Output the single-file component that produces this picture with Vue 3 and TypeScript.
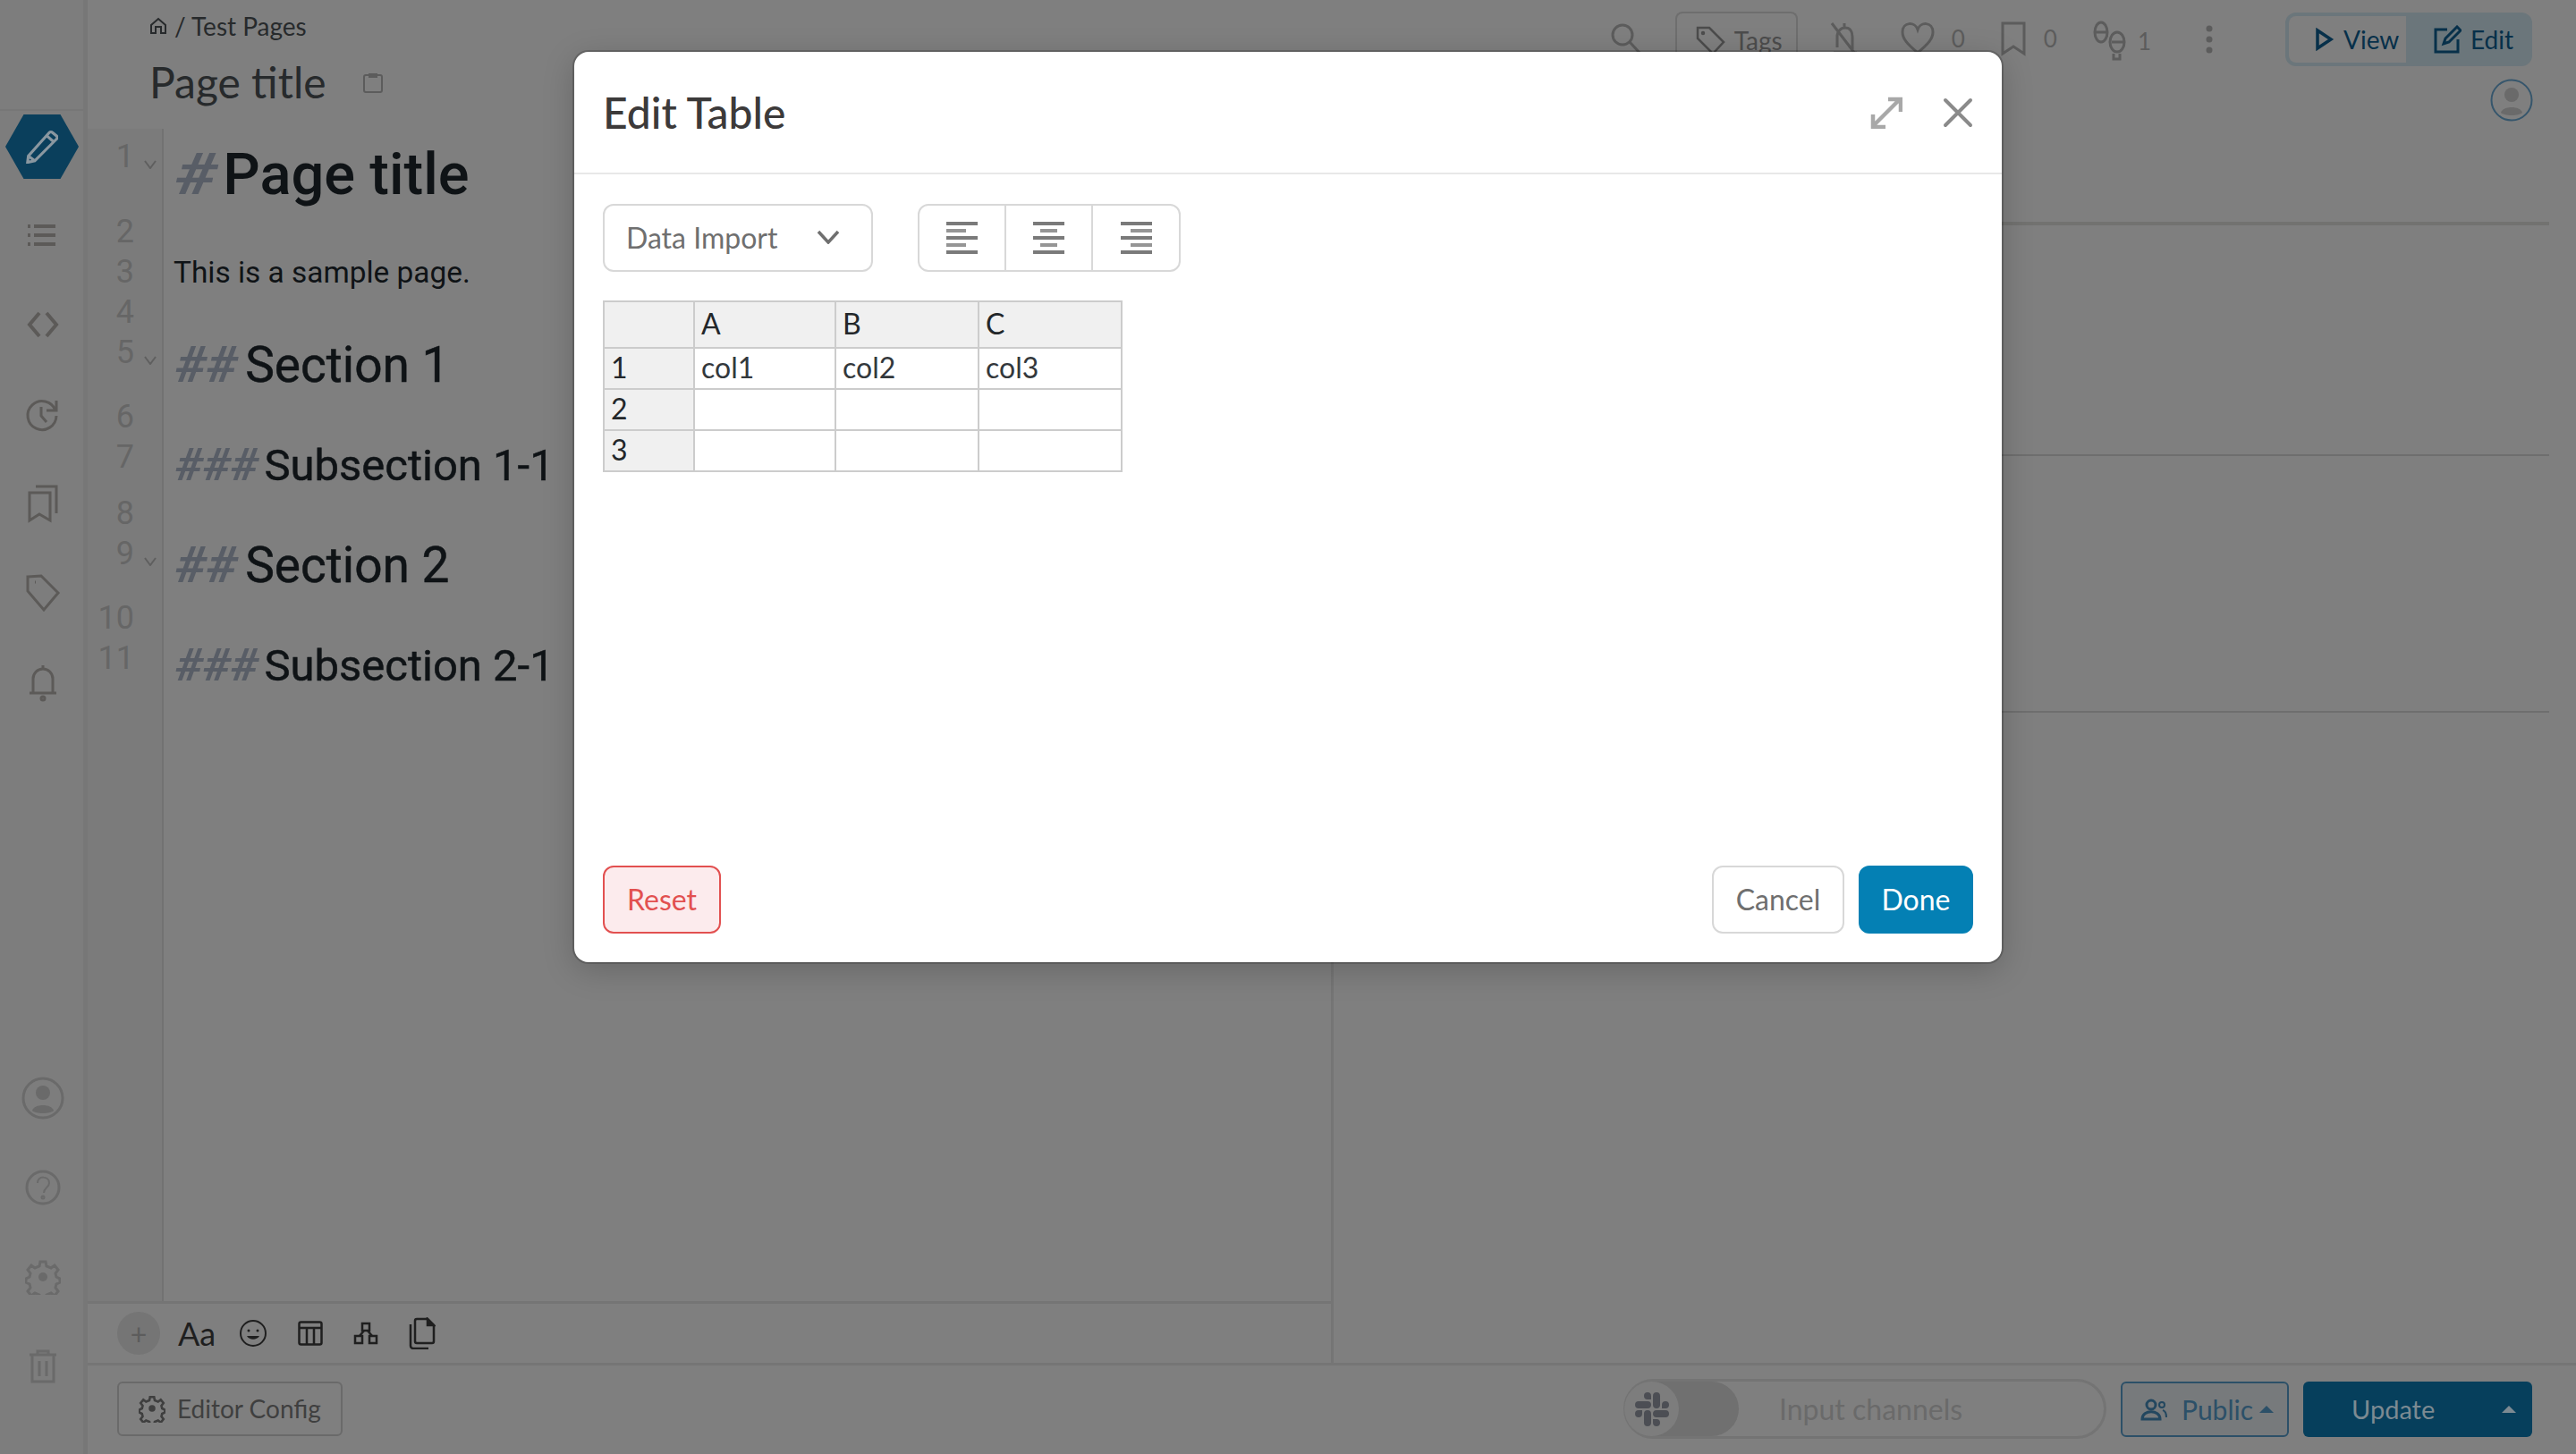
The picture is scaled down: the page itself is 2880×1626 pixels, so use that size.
<script setup lang="ts">
const sideTop = ['list', 'code', 'history', 'marks', 'tag', 'bell']
const rows = [
  { n: '', cells: ['A', 'B', 'C'], head: true },
  { n: '1', cells: ['col1', 'col2', 'col3'], head: false },
  { n: '2', cells: ['', '', ''], head: false },
  { n: '3', cells: ['', '', ''], head: false },
]
const lines = [
  { n: 1, h: 84, fold: true },
  { n: 2, h: 45, fold: false },
  { n: 3, h: 45, fold: false },
  { n: 4, h: 45, fold: false },
  { n: 5, h: 72, fold: true },
  { n: 6, h: 45, fold: false },
  { n: 7, h: 63, fold: false },
  { n: 8, h: 45, fold: false },
  { n: 9, h: 72, fold: true },
  { n: 10, h: 45, fold: false },
  { n: 11, h: 63, fold: false },
]
const slack = 'M5.042 15.165a2.528 2.528 0 0 1-2.52 2.523A2.528 2.528 0 0 1 0 15.165a2.527 2.527 0 0 1 2.522-2.52h2.52v2.52zM6.313 15.165a2.527 2.527 0 0 1 2.521-2.52 2.527 2.527 0 0 1 2.521 2.52v6.313A2.528 2.528 0 0 1 8.834 24a2.528 2.528 0 0 1-2.521-2.522v-6.313zM8.834 5.042a2.528 2.528 0 0 1-2.521-2.52A2.528 2.528 0 0 1 8.834 0a2.528 2.528 0 0 1 2.521 2.522v2.52H8.834zM8.834 6.313a2.528 2.528 0 0 1 2.521 2.521 2.528 2.528 0 0 1-2.521 2.521H2.522A2.528 2.528 0 0 1 0 8.834a2.528 2.528 0 0 1 2.522-2.521h6.312zM18.956 8.834a2.528 2.528 0 0 1 2.522-2.521A2.528 2.528 0 0 1 24 8.834a2.528 2.528 0 0 1-2.522 2.521h-2.522V8.834zM17.688 8.834a2.528 2.528 0 0 1-2.523 2.521 2.527 2.527 0 0 1-2.52-2.521V2.522A2.527 2.527 0 0 1 15.165 0a2.528 2.528 0 0 1 2.523 2.522v6.312zM15.165 18.956a2.528 2.528 0 0 1 2.523 2.522A2.528 2.528 0 0 1 15.165 24a2.527 2.527 0 0 1-2.52-2.522v-2.522h2.52zM15.165 17.688a2.527 2.527 0 0 1-2.52-2.523 2.526 2.526 0 0 1 2.52-2.52h6.313A2.527 2.527 0 0 1 24 15.165a2.528 2.528 0 0 1-2.522 2.523h-6.313z'
</script>

<template>
  <div class="app">
    <aside class="sidebar">
      <div class="side-top"></div>
      <div class="hex">
        <svg width="36" height="37" viewBox="0 0 40 40" fill="none" stroke="#8a97a0" stroke-width="3.5"><path d="M2 39l1-8L29 2c1-1 3-1 4 0l5 4c1 1 1 3 0 4L11 37zM3 31l8 6M26 6l8 7"/></svg>
      </div>
      <div class="side-icons">
        <svg v-for="k in sideTop" :key="k" width="40" height="52" viewBox="0 0 40 52" fill="none" stroke="#5c5a58" stroke-width="3">
          <template v-if="k === 'list'"><path d="M10 16h24M10 26h24M10 36h24" stroke-width="4"/><path d="M3 16h3M3 26h3M3 36h3" stroke-width="4"/></template>
          <template v-if="k === 'code'"><path d="M16 13L5 26l11 13M24 13l11 13-11 13" stroke-width="4"/></template>
          <template v-if="k === 'history'"><path d="M34 22a16 16 0 1 0 1 6M35 11v11H24M18 18v10l6 7" /></template>
          <template v-if="k === 'marks'"><path d="M5 14h23v31L16 38 5 45zM12 7h23v30"/></template>
          <template v-if="k === 'tag'"><path d="M3 8l15-1 19 19-16 19L3 24zM11 14h1"/></template>
          <template v-if="k === 'bell'"><path d="M5 38h30M9 38V22a11 11 0 0 1 22 0v16M20 7v4"/><circle cx="20" cy="44" r="2"/></template>
        </svg>
      </div>
      <div class="side-bottom">
        <svg class="sb-av" width="48" height="48" viewBox="0 0 48 48" fill="none" stroke="#6a6a6a" stroke-width="3"><circle cx="24" cy="24" r="22"/><circle cx="24" cy="18" r="8" fill="#6a6a6a" stroke="none"/><path d="M12 38c2-8 22-8 24 0-4 4-20 4-24 0z" fill="#6a6a6a" stroke="none"/></svg>
        <svg width="40" height="40" viewBox="0 0 40 40" fill="none" stroke="#6a6a6a" stroke-width="3"><circle cx="20" cy="20" r="18"/><path d="M14 15c0-9 13-8 13 0 0 5-6 5-6 11" stroke-width="2"/><circle cx="20" cy="31" r="1"/></svg>
        <svg width="40" height="40" viewBox="0 0 40 40" fill="#6a6a6a" stroke="#6a6a6a" stroke-width="3"><path fill="none" d="M17 3h6l1 5 5 2 4-3 4 5-3 4 1 4 4 2v4l-4 2-1 4 3 4-4 5-4-3-5 2-1 4h-6l-1-4-5-2-4 3-4-5 3-4-1-4-4-2v-4l4-2 1-4-3-4 4-5 4 3 5-2z"/><circle cx="20" cy="20" r="5" stroke="none"/></svg>
        <svg width="40" height="40" viewBox="0 0 40 40" fill="none" stroke="#6a6a6a" stroke-width="3"><path d="M5 7h30M14 6V3h12v3M8 8v29h24V8M16 14v17M24 14v17"/></svg>
      </div>
    </aside>

    <div class="main">
      <header class="top">
        <div class="crumbs">
          <div class="crumb">
            <svg width="20" height="20" viewBox="0 0 20 20" fill="none" stroke="#272a2c" stroke-width="2"><path d="M2 9l8-7 8 7v9h-5v-7H7v7H2z"/></svg>
            <span>/ Test Pages</span>
          </div>
          <div class="title-row">
            <span class="page-title">Page title</span>
            <svg width="24" height="24" viewBox="0 0 24 24" fill="none" stroke="#5c5c5c" stroke-width="2"><rect x="2" y="4" width="20" height="19" rx="2"/><path d="M8 3h8v3H8z" fill="#5c5c5c"/></svg>
          </div>
        </div>
        <div class="actions">
          <svg class="a-search" width="36" height="36" viewBox="0 0 36 36" fill="none" stroke="#5c5c5c" stroke-width="3"><circle cx="14" cy="14" r="11"/><path d="M22 22l12 13"/></svg>
          <div class="tags">
            <svg width="34" height="34" viewBox="0 0 34 34" fill="none" stroke="#4c4c4c" stroke-width="2.5"><path d="M3 3h13l16 16-12 13L3 15z"/><circle cx="9" cy="9" r="1"/></svg>
            <span>Tags</span>
          </div>
          <svg class="a-bell" width="36" height="40" viewBox="0 0 36 40" fill="none" stroke="#5c5c5c" stroke-width="3"><path d="M4 3l26 34M6 36h26M10 30V18c0-6 4-10 9-10s8 4 8 10v14M18 8V3"/></svg>
          <div class="count heart">
            <svg width="40" height="40" viewBox="0 0 40 40" fill="none" stroke="#5c5c5c" stroke-width="3"><path d="M20 36C8 26 3 20 3 13c0-12 14-12 17-3 3-9 17-9 17 3 0 7-5 13-17 23z"/></svg>
            <span>0</span>
          </div>
          <div class="count mark">
            <svg width="30" height="40" viewBox="0 0 30 40" fill="none" stroke="#5c5c5c" stroke-width="3"><path d="M3 3h24v34l-12-8-12 8z"/></svg>
            <span>0</span>
          </div>
          <div class="count foot">
            <svg width="40" height="46" viewBox="0 0 40 46" fill="none" stroke="#5c5c5c" stroke-width="3"><ellipse cx="10" cy="13" rx="7" ry="11"/><path d="M4 13h13"/><ellipse cx="28" cy="24" rx="8" ry="11"/><path d="M22 24h13M24 37v6h7v-6"/></svg>
            <span>1</span>
          </div>
          <svg class="a-dots" width="10" height="32" viewBox="0 0 10 32" fill="#5c5c5c"><circle cx="5" cy="4" r="3.5"/><circle cx="5" cy="16" r="3.5"/><circle cx="5" cy="28" r="3.5"/></svg>
          <div class="mode">
            <div class="mode-view">
              <svg width="22" height="26" viewBox="0 0 22 26" fill="none" stroke="#07304a" stroke-width="3.5"><path d="M3 3l15 10L3 23z"/></svg>
              <span>View</span>
            </div>
            <div class="mode-edit">
              <svg width="32" height="32" viewBox="0 0 32 32" fill="none" stroke="#07304a" stroke-width="3"><path d="M16 5H3v25h25V16M12 21l2-6L27 2l4 4-13 13z"/></svg>
              <span>Edit</span>
            </div>
          </div>
        </div>
      </header>

      <div class="work">
        <div class="left">
          <div class="editor">
            <div class="gutter">
              <div v-for="l in lines" :key="l.n" class="gline" :style="{ height: l.h + 'px' }">
                <span class="num">{{ l.n }}</span>
                <svg v-if="l.fold" class="fold" width="14" height="10" viewBox="0 0 14 10" fill="none" stroke="#5f5f5f" stroke-width="2"><path d="M1 1l6 8 6-8"/></svg>
              </div>
            </div>
            <div class="code">
              <div class="c-h1"><i>#</i>Page title</div>
              <div class="c-p">This is a sample page.</div>
              <div class="c-h2"><i>##</i>Section 1</div>
              <div class="c-h3"><i>###</i>Subsection 1-1</div>
              <div class="c-h2"><i>##</i>Section 2</div>
              <div class="c-h3"><i>###</i>Subsection 2-1</div>
            </div>
          </div>
          <div class="toolbar">
            <div class="plus">+</div>
            <span class="aa">Aa</span>
            <svg width="30" height="30" viewBox="0 0 30 30" fill="none" stroke="#1f1f1f" stroke-width="2"><circle cx="15" cy="15" r="14"/><circle cx="10" cy="12" r="1.5" fill="#1f1f1f" stroke="none"/><circle cx="20" cy="12" r="1.5" fill="#1f1f1f" stroke="none"/><path d="M8 18c3 5 11 5 14 0z" fill="#1f1f1f" stroke="none"/></svg>
            <svg class="tb-table" width="28" height="28" viewBox="0 0 28 28" fill="none" stroke="#1f1f1f" stroke-width="2.5"><rect x="1.5" y="1.5" width="25" height="25" rx="2"/><path d="M1.5 8h25M10 8v18M18 8v18"/></svg>
            <svg width="28" height="26" viewBox="0 0 28 26" fill="none" stroke="#1f1f1f" stroke-width="2.5"><rect x="10" y="2" width="8" height="8"/><rect x="2" y="16" width="8" height="8"/><rect x="18" y="16" width="8" height="8"/><path d="M12 10l-5 6M16 10l5 6"/></svg>
            <svg width="30" height="36" viewBox="0 0 30 36" fill="none" stroke="#1f1f1f" stroke-width="2.5"><path d="M9 2h12l7 7v18a2 2 0 0 1-2 2H9a2 2 0 0 1-2-2V4a2 2 0 0 1 2-2z"/><path d="M2 8v24a3 3 0 0 0 3 3h17"/><path d="M21 2v7h7z" fill="#1f1f1f"/></svg>
          </div>
        </div>
        <div class="preview">
          <div class="avatar-row">
            <svg width="48" height="48" viewBox="0 0 48 48" fill="none"><circle cx="24" cy="24" r="22.5" stroke="#36566c" stroke-width="2"/><circle cx="24" cy="18" r="8" fill="#6a6a6a"/><path d="M12 38c2-8 22-8 24 0-4 4-20 4-24 0z" fill="#6a6a6a"/></svg>
          </div>
          <div class="prev-rule r1"></div>
          <div class="prev-rule r2"></div>
          <div class="prev-rule r3"></div>
        </div>
      </div>

      <footer class="foot-bar">
        <div class="cfg">
          <svg width="30" height="32" viewBox="0 0 40 40" fill="#3f3f3f" stroke="#3f3f3f" stroke-width="3.5"><path fill="none" d="M17 3h6l1 5 5 2 4-3 4 5-3 4 1 4 4 2v4l-4 2-1 4 3 4-4 5-4-3-5 2-1 4h-6l-1-4-5-2-4 3-4-5 3-4-1-4-4-2v-4l4-2 1-4-3-4 4-5 4 3 5-2z"/><circle cx="20" cy="20" r="5" stroke="none"/></svg>
          <span>Editor Config</span>
        </div>
        <div class="foot-right">
          <div class="slack">
            <div class="knob-wrap">
              <div class="knob">
                <svg width="38" height="38" viewBox="0 0 24 24" fill="#4c4e54"><path :d="slack"/></svg>
              </div>
            </div>
            <span>Input channels</span>
          </div>
          <div class="public">
            <svg width="30" height="26" viewBox="0 0 30 26" fill="none" stroke="#23475f" stroke-width="3"><circle cx="12" cy="8" r="5"/><path d="M2 24c0-11 20-11 20 0z"/><circle cx="24" cy="8" r="3" stroke-width="2"/><path d="M25 14c3 1 4 4 4 8" stroke-width="2"/></svg>
            <span>Public</span>
            <i class="caret"></i>
          </div>
          <div class="update">
            <span>Update</span>
            <i class="caret"></i>
          </div>
        </div>
      </footer>
    </div>

    <div class="backdrop">
      <section class="modal">
        <div class="m-head">
          <h2>Edit Table</h2>
          <div class="m-head-icons">
            <svg width="36" height="36" viewBox="0 0 36 36" fill="none" stroke="#a8a8a8" stroke-width="4.5"><path d="M4 32L32 4M20 3h14v14M3 20v14h14"/></svg>
            <svg width="34" height="34" viewBox="0 0 34 34" fill="none" stroke="#8a8a8a" stroke-width="4" stroke-linecap="round"><path d="M3 3l28 28M31 3L3 31"/></svg>
          </div>
        </div>
        <div class="m-body">
          <div class="m-tools">
            <div class="select">
              <span>Data Import</span>
              <svg width="26" height="16" viewBox="0 0 26 16" fill="none" stroke="#6f6f6f" stroke-width="3.5"><path d="M2 2l11 12L24 2"/></svg>
            </div>
            <div class="aligns">
              <button class="al"><svg width="35" height="36" viewBox="0 0 35 36" fill="#7a7a7a"><rect y="0" width="35" height="4"/><rect y="8" width="22" height="4" opacity=".8"/><rect y="16" width="35" height="4"/><rect y="24" width="22" height="4" opacity=".8"/><rect y="32" width="35" height="4"/></svg></button>
              <button class="al"><svg width="35" height="36" viewBox="0 0 35 36" fill="#7a7a7a"><rect y="0" width="35" height="4"/><rect x="8" y="8" width="19" height="4" opacity=".8"/><rect y="16" width="35" height="4"/><rect x="8" y="24" width="19" height="4" opacity=".8"/><rect y="32" width="35" height="4"/></svg></button>
              <button class="al"><svg width="35" height="36" viewBox="0 0 35 36" fill="#7a7a7a"><rect y="0" width="35" height="4"/><rect x="11" y="8" width="24" height="4" opacity=".8"/><rect y="16" width="35" height="4"/><rect x="11" y="24" width="24" height="4" opacity=".8"/><rect y="32" width="35" height="4"/></svg></button>
            </div>
          </div>
          <table class="sheet">
            <colgroup><col class="c0" /><col class="c1" /><col class="c2" /><col class="c3" /></colgroup>
            <tbody>
              <tr v-for="(r, i) in rows" :key="i" :class="{ head: r.head }">
                <th>{{ r.n }}</th>
                <component :is="r.head ? 'th' : 'td'" v-for="(c, j) in r.cells" :key="j">{{ c }}</component>
              </tr>
            </tbody>
          </table>
        </div>
        <div class="m-foot">
          <button class="btn reset">Reset</button>
          <div class="m-foot-right">
            <button class="btn cancel">Cancel</button>
            <button class="btn done">Done</button>
          </div>
        </div>
      </section>
    </div>
  </div>
</template>

<style scoped>
.app { position: relative; width: 2880px; height: 1626px; display: flex; overflow: hidden; background: #7f7f7f; font-family: Lato, "Liberation Sans", sans-serif; color: #272a2c; }
.sidebar { width: 98px; flex: none; background: #7d7d7d; box-shadow: inset -5px 0 0 #777; display: flex; flex-direction: column; align-items: center; }
.side-top { height: 122px; width: 100%; border-bottom: 2px solid #777; flex: none; margin-bottom: 4px; }
.hex { width: 82px; height: 72px; flex: none; margin-left: -4px; background: #0a3f5c; clip-path: polygon(25% 0, 75% 0, 100% 50%, 75% 100%, 25% 100%, 0 50%); display: flex; align-items: center; justify-content: center; }
.side-icons { display: flex; flex-direction: column; gap: 48px; margin-top: 37px; margin-left: -3px; }
.side-bottom { margin-top: auto; margin-left: -3px; padding-bottom: 78px; display: flex; flex-direction: column; align-items: center; gap: 60px; }
.sb-av { margin-bottom: -4px; }
.main { flex: 1; display: flex; flex-direction: column; min-width: 0; }
.top { height: 144px; flex: none; display: flex; justify-content: space-between; padding: 0 49px 0 69px; }
.crumb { display: flex; align-items: center; gap: 8px; font-size: 28px; padding-top: 11px; line-height: 36px; }
.title-row { display: flex; align-items: center; gap: 40px; margin-top: 14px; }
.page-title { font-size: 48px; line-height: 62px; }
.actions { display: flex; align-items: flex-start; }
.a-search { margin-top: 25px; margin-right: 37px; }
.tags { height: 62px; width: 137px; box-sizing: border-box; margin-top: 13px; border: 2px solid #6e6e6e; border-bottom: 0; border-radius: 8px 8px 0 0; display: flex; align-items: center; gap: 10px; padding: 0 0 0 20px; font-size: 28px; color: #4c4c4c; }
.a-bell { margin: 23px 0 0 34px; }
.count { display: flex; align-items: center; color: #5c5c5c; font-size: 26px; margin-top: 23px; gap: 18px; }
.heart { margin-left: 44px; }
.mark { margin-left: 39px; gap: 19px; }
.foot { margin-left: 39px; gap: 11px; }
.a-dots { margin: 28px 0 0 60px; }
.mode { margin: 14px 0 0 80px; width: 276px; height: 60px; box-sizing: border-box; padding: 4px; border-radius: 12px; background: #6b767b; display: flex; font-size: 28px; color: #07304a; }
.mode-view { width: 131px; background: #7f7f7f; border-radius: 8px 0 0 8px; display: flex; align-items: center; gap: 10px; padding-left: 29px; box-sizing: border-box; }
.mode-edit { flex: 1; display: flex; align-items: center; gap: 10px; padding-left: 30px; }
.work { flex: 1; display: flex; min-height: 0; }
.left { width: 1390px; flex: none; display: flex; flex-direction: column; border-right: 3px solid #757575; }
.editor { flex: 1; display: flex; min-height: 0; }
.gutter { width: 83px; flex: none; border-right: 2px solid #727272; background: #7b7b7b; color: #666; font-size: 36px; padding-top: 9px; }
.gline { position: relative; display: flex; justify-content: flex-end; padding-right: 31px; line-height: 45px; }
.num { font-family: Roboto, sans-serif; }
.fold { position: absolute; right: 6px; top: 26px; }
.code { padding-left: 11px; color: #0f1316; white-space: nowrap; font-family: Roboto, sans-serif; }
.code i { display: inline-block; color: #585d66; font-style: italic; font-weight: 700; transform: scaleX(1.1); transform-origin: left center; }
.c-h1, .c-h2, .c-h3 { padding-left: 2px; }
.c-h1 { font-size: 65px; font-weight: 500; line-height: 84px; height: 129px; margin-top: 9px; }
.c-h1 i { margin-right: 16px; transform: scaleX(1.25); }
.c-p { font-size: 33.4px; line-height: 45px; height: 90px; }
.c-h2 { font-size: 55px; line-height: 72px; height: 117px; -webkit-text-stroke: 0.5px #0f1316; }
.c-h2 i { margin-right: 15px; -webkit-text-stroke: 0; }
.c-h3 { font-size: 49px; line-height: 63px; height: 107px; -webkit-text-stroke: 0.5px #0f1316; }
.c-h3 i { margin-right: 15px; -webkit-text-stroke: 0; }
.toolbar { height: 66px; flex: none; border-top: 3px solid #757575; display: flex; align-items: center; gap: 34px; padding-left: 33px; color: #1f1f1f; }
.plus { width: 48px; height: 48px; border-radius: 50%; background: #757575; display: flex; align-items: center; justify-content: center; font-size: 32px; color: #5c5c5c; margin-right: -14px; }
.aa { font-size: 36px; margin-right: -7px; }
.tb-table { margin-left: 1px; }
.preview { flex: 1; position: relative; }
.avatar-row { display: flex; justify-content: flex-end; padding: 0 48px 0 0; margin-top: -56px; }
.prev-rule { position: absolute; left: 0; right: 30px; height: 2px; background: #6e6e6e; }
.r1 { top: 104px; height: 4px; background: #727270; }
.r2 { top: 364px; }
.r3 { top: 651px; }
.foot-bar { height: 102px; flex: none; border-top: 3px solid #757575; display: flex; justify-content: space-between; align-items: center; padding: 0 49px 2px 33px; box-sizing: border-box; }
.cfg { width: 252px; height: 61px; box-sizing: border-box; border: 2px solid #6a6a6a; border-radius: 6px; display: flex; align-items: center; gap: 13px; padding-left: 22px; padding-bottom: 2px; font-size: 28px; color: #3f3f3f; }
.foot-right { display: flex; align-items: center; gap: 16px; }
.slack { width: 540px; height: 67px; box-sizing: border-box; border: 3px solid #747474; border-radius: 34px; display: flex; align-items: center; font-size: 32px; color: #6a6a6a; }
.knob-wrap { width: 128px; height: 61px; background: #707070; border-radius: 31px; margin-left: -2px; margin-right: 45px; display: flex; align-items: center; }
.knob { width: 61px; height: 61px; background: #7d7d7d; border-radius: 50%; display: flex; align-items: center; justify-content: center; }
.public { width: 188px; height: 62px; box-sizing: border-box; border: 2px solid #2c5068; border-radius: 6px; background: #777a7c; display: flex; align-items: center; padding-left: 20px; gap: 16px; color: #2c5068; font-size: 30px; }
.caret { width: 0; height: 0; border-left: 8px solid transparent; border-right: 8px solid transparent; border-bottom: 8px solid currentColor; margin-left: -9px; }
.update { width: 256px; height: 62px; box-sizing: border-box; background: #063f5c; border-radius: 6px; display: flex; align-items: center; justify-content: space-between; padding: 0 18px 0 54px; color: #7c8a92; font-size: 29px; }
.backdrop { position: absolute; inset: 0; }
.modal { position: absolute; left: 642px; top: 58px; width: 1596px; height: 1018px; box-sizing: border-box; background: #fff; border-radius: 16px; box-shadow: 0 0 0 2px rgba(0,0,0,.18), 0 8px 36px rgba(0,0,0,.2); display: flex; flex-direction: column; }
.m-head { height: 137px; flex: none; box-sizing: border-box; border-bottom: 2px solid #e8e8e8; display: flex; align-items: center; justify-content: space-between; padding: 0 32px; }
.m-head h2 { margin: 0; font-size: 48px; font-weight: 500; color: #3c3a3a; }
.m-head-icons { display: flex; align-items: center; gap: 45px; }
.m-body { flex: 1; padding: 33px 32px 0; }
.m-tools { display: flex; gap: 50px; }
.select { width: 302px; height: 76px; box-sizing: border-box; border: 2px solid #d8d8d8; border-radius: 12px; display: flex; align-items: center; justify-content: space-between; padding: 0 35px 2px 24px; color: #6f6f6f; font-size: 32px; }
.aligns { display: flex; height: 76px; box-sizing: border-box; border: 2px solid #d8d8d8; border-radius: 12px; width: 294px; }
.al { width: 97px; flex: none; background: none; border: 0; padding: 18px 0 0; box-sizing: border-box; display: flex; justify-content: center; border-right: 2px solid #d8d8d8; }
.al:last-child { border-right: 0; }
.sheet { border-collapse: collapse; table-layout: fixed; width: 579px; margin-top: 32px; font-size: 32px; color: #33383c; border: 2px solid #ccc; }
.c0 { width: 101px; } .c1 { width: 158px; } .c2 { width: 160px; } .c3 { width: 160px; }
.sheet th, .sheet td { border: 2px solid #ccc; font-weight: 400; text-align: left; padding: 0 7px 2px; height: 42px; line-height: 38px; }
.sheet th { background: #f0f0f0; color: #23272a; }
.sheet tr.head th { height: 48px; }
.m-foot { flex: none; height: 108px; padding: 0 32px; display: flex; justify-content: space-between; align-items: flex-start; }
.m-foot-right { display: flex; gap: 16px; }
.btn { height: 76px; box-sizing: border-box; border-radius: 12px; font-family: inherit; font-size: 32px; border: 2px solid; padding: 0 0 2px; }
.reset { width: 132px; background: #fcebed; border-color: #e25050; color: #e25050; }
.cancel { width: 148px; background: #fff; border-color: #d8d8d8; color: #6f6f6f; }
.done { width: 128px; background: #0480b4; border-color: #0480b4; color: #fff; }
</style>
